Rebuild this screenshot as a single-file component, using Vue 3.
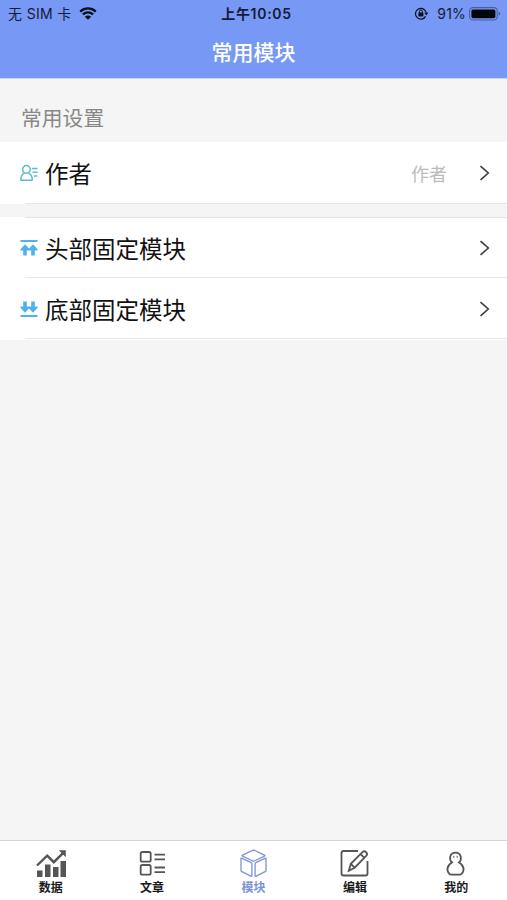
<template>
  <div class="page">
    <header class="header">
      <div class="status">
        <div class="status-left">
          <span>无 SIM 卡</span>
          <svg class="wifi" viewBox="0 0 18 13">
            <path d="M1.2 4.6a11.2 11.2 0 0 1 15.6 0M3.9 7.5a7.3 7.3 0 0 1 10.2 0" fill="none" stroke="#0b0f22" stroke-width="2.3" />
            <path d="M9 12.8 5.9 9.7a4.4 4.4 0 0 1 6.2 0z" fill="#0b0f22" />
          </svg>
        </div>
        <div class="status-time">上午10:05</div>
        <div class="status-right">
          <svg class="lock" viewBox="0 0 15 13">
            <path d="M11.6 9.4A5.4 5.4 0 1 1 12 5" fill="none" stroke="#0b0f22" stroke-width="1.2" />
            <path d="M10.2 5.6h4.2l-2.1 2.9z" fill="#0b0f22" />
            <rect x="4.400" y="5.600" width="5" height="3.800" rx=".5" fill="#0b0f22" />
            <path d="M5.400 6V4.500a1.500 1.500 0 0 1 3 0V6" fill="none" stroke="#0b0f22" stroke-width="1" />
          </svg>
          <span class="percent">91%</span>
          <svg class="battery" viewBox="0 0 32 14">
            <rect x=".6" y=".6" width="27.6" height="12.4" rx="3.4" fill="none" stroke="#4b5f9f" stroke-width="1.1" />
            <rect x="2.4" y="2.4" width="24" height="8.8" rx="1.6" fill="#05060c" />
            <path d="M29.6 4.8q1.7.4 1.7 2t-1.7 2z" fill="#4b5f9f" />
          </svg>
        </div>
      </div>
      <h1 class="title">常用模块</h1>
    </header>

    <main class="content">
      <div class="section-title">常用设置</div>
      <section v-for="(group, i) in groups" :key="i" class="group">
        <div v-for="item in group" :key="item.name" class="row">
          <svg v-if="item.icon === 'author'" class="row-icon" viewBox="0 0 18 18" fill="none" stroke="#5cb9d2" stroke-width="1.5">
            <circle cx="6.4" cy="5.4" r="3.8" />
            <path d="M4.3 8.8C2.2 10.2 1 12.3.9 15.4q0 .8.8.8h9.8q.8 0 .8-.8C12.2 12.3 10.7 10.2 8.5 8.8" />
            <path d="M12 4.5h5.5M12.5 8.2h5M14 11.900h3.500" />
          </svg>
          <svg v-else class="row-icon" :class="{ flip: item.icon === 'bottom' }" viewBox="0 0 18 18" fill="#50b2ea">
            <path d="M.5.9h17v2H.5zM5 5.200 9 9.400 13 5.200 17.600 10.300v1.300h-2.800v4.900h-3.600v-4.900H6.800v4.900H3.200v-4.900H.4v-1.300z" />
          </svg>
          <span class="row-name">{{ item.name }}</span>
          <span class="row-value">{{ item.value }}</span>
          <svg class="arrow" viewBox="0 0 12 16">
            <path d="M1.500 1.200 9.300 8l-7.800 6.800" fill="none" stroke="#3c3c3c" stroke-width="1.600" />
          </svg>
        </div>
      </section>
    </main>

    <nav class="tabbar">
      <div v-for="tab in tabs" :key="tab.key" class="tab" :class="{ active: tab.key === current }" @click="current = tab.key">
        <svg class="tab-icon" viewBox="0 0 32 30" fill="none" stroke="currentColor" stroke-width="1.800">
          <template v-if="tab.key === 'data'">
            <path d="M2 16.500 12.200 6.600l6.600 6.600L29 3.200" stroke-width="2.400" />
            <path d="M23.800 1.200h7v7zM2 21.500h5.500v6.500H2zM10 15.500h5.500V28H10zM18 18h5.500v10H18zM25.500 12H31v16h-5.500z" fill="currentColor" stroke="none" />
          </template>
          <template v-else-if="tab.key === 'article'">
            <rect x="4.700" y="3" width="10" height="9.700" rx="1.800" />
            <rect x="4.700" y="16" width="10" height="9.700" rx="1.800" />
            <path d="M18.500 5.600H29M18.500 10.300H29M18.500 18.500H29M18.500 23.200H29" />
          </template>
          <template v-else-if="tab.key === 'module'">
            <path d="m15.500.9 11 5.200q.9.500 0 1L16.200 12q-.7.300-1.400 0L4.500 7.100q-.9-.5 0-1zM3.500 9.200l9.700 4.500q.7.300.7 1v11.800q0 1.200-1 .7L3.800 22.700q-.8-.4-.8-1.200V9.800q0-.8.500-.6zM27.500 9.200l-9.700 4.500q-.7.300-.7 1v11.800q0 1.200 1 .7l9.100-4.500q.8-.4.800-1.200V9.800q0-.8-.5-.6z" stroke-width="1.300" />
          </template>
          <template v-else-if="tab.key === 'edit'">
            <path d="M19 2H4.500Q2.500 2 2.500 4v20.500q0 2 2 2h22q2 0 2-2V12" />
            <path d="m9.800 21.800 2-7L23.700 2.900q1.600-1.400 3.400.3t.3 3.500L15.700 18.700zM21.700 5.200l3.600 3.600M11.800 14.800l3.900 3.900" />
          </template>
          <template v-else>
            <path d="M12 13.500C8.800 10.500 9.500 3.600 15.500 3.600s6.700 6.900 3.500 9.900c5.200 2.800 5.800 8.100 2.600 11.400q-.8.700-2 .7h-8.200q-1.200 0-2-.7c-3.200-3.300-2.600-8.600 2.600-11.400z" />
            <path d="M13.800 6.800v2M17.200 6.800v2" stroke-width="1" />
          </template>
        </svg>
        <span class="tab-name">{{ tab.name }}</span>
      </div>
    </nav>
  </div>
</template>

<script setup>
import { ref } from 'vue'

const current = ref('module')

const groups = [
  [{ name: '作者', icon: 'author', value: '作者' }],
  [
    { name: '头部固定模块', icon: 'top' },
    { name: '底部固定模块', icon: 'bottom' }
  ]
]

const tabs = [
  { key: 'data', name: '数据' },
  { key: 'article', name: '文章' },
  { key: 'module', name: '模块' },
  { key: 'edit', name: '编辑' },
  { key: 'mine', name: '我的' }
]
</script>

<style>
body {
  margin: 0;
}
</style>

<style scoped>
.page {
  display: flex;
  flex-direction: column;
  height: 100vh;
  overflow: hidden;
  background: #f5f5f5;
  font-family: Inter, "Noto Sans CJK SC", sans-serif;
  color: #111;
}

.header {
  box-sizing: border-box;
  height: 79px;
  background: #7898f5;
  border-bottom: 1px solid #c5d4f3;
}

.status {
  display: grid;
  grid-template-columns: 1fr auto 1fr;
  align-items: center;
  height: 27px;
  padding: 0 6px 0 8px;
  color: #151b35;
  font-size: 14px;
  line-height: 27px;
}

.status-left,
.status-right {
  display: flex;
  align-items: center;
}

.status-left {
  letter-spacing: 0.35px;
}

.status-right {
  justify-content: flex-end;
}

.status-time {
  margin-left: 4px;
  font-weight: 600;
  font-size: 14px;
  letter-spacing: 0.7px;
}

.wifi {
  width: 18px;
  height: 13px;
  margin-left: 7px;
}

.lock {
  width: 15px;
  height: 13px;
  margin-right: 8px;
}

.percent {
  letter-spacing: 0.2px;
}

.battery {
  width: 32px;
  height: 14px;
  margin-left: 3px;
}

.title {
  margin: 0;
  color: #fff;
  font-size: 21px;
  font-weight: 500;
  line-height: 52px;
  text-align: center;
}

.content {
  flex: 1;
}

.section-title {
  height: 63px;
  padding-left: 21px;
  color: #888;
  font-size: 20.8px;
  line-height: 79px;
}

.group {
  margin-bottom: 13px;
  background: linear-gradient(#e4e4e4, #e4e4e4) right top / calc(100% - 25px) 1px no-repeat #fff;
}

.group:last-child {
  padding-bottom: 1px;
}

.section-title + .group {
  background: #fff;
}

.row {
  display: flex;
  align-items: center;
  box-sizing: border-box;
  height: 61px;
  padding: 0 16px 0 20px;
  background: linear-gradient(#e8e8e8, #e8e8e8) right bottom / calc(100% - 25px) 1px no-repeat;
}

.section-title + .group .row {
  height: 62px;
}

.row-icon {
  width: 18px;
  height: 18px;
}

.flip {
  transform: scaleY(-1);
}

.row-name {
  flex: 1;
  margin-left: 7px;
  padding-top: 4px;
  font-size: 23.5px;
  line-height: 34px;
}

.row-value {
  margin-right: 32px;
  color: #bbb;
  font-size: 18px;
}

.arrow {
  width: 12px;
  height: 16px;
}

.tabbar {
  display: flex;
  box-sizing: border-box;
  height: 60px;
  border-top: 1px solid #d4d4d4;
  background: #fff;
}

.tab {
  display: flex;
  flex: 1;
  flex-direction: column;
  align-items: center;
  padding-top: 8px;
  color: #555;
}

.tab-icon {
  width: 32px;
  height: 30px;
}

.tab-name {
  margin-top: 1px;
  color: #1a1a1a;
  font-size: 12px;
  font-weight: 700;
  line-height: 16px;
}

.active,
.active .tab-name {
  color: #7b94d6;
}
</style>
